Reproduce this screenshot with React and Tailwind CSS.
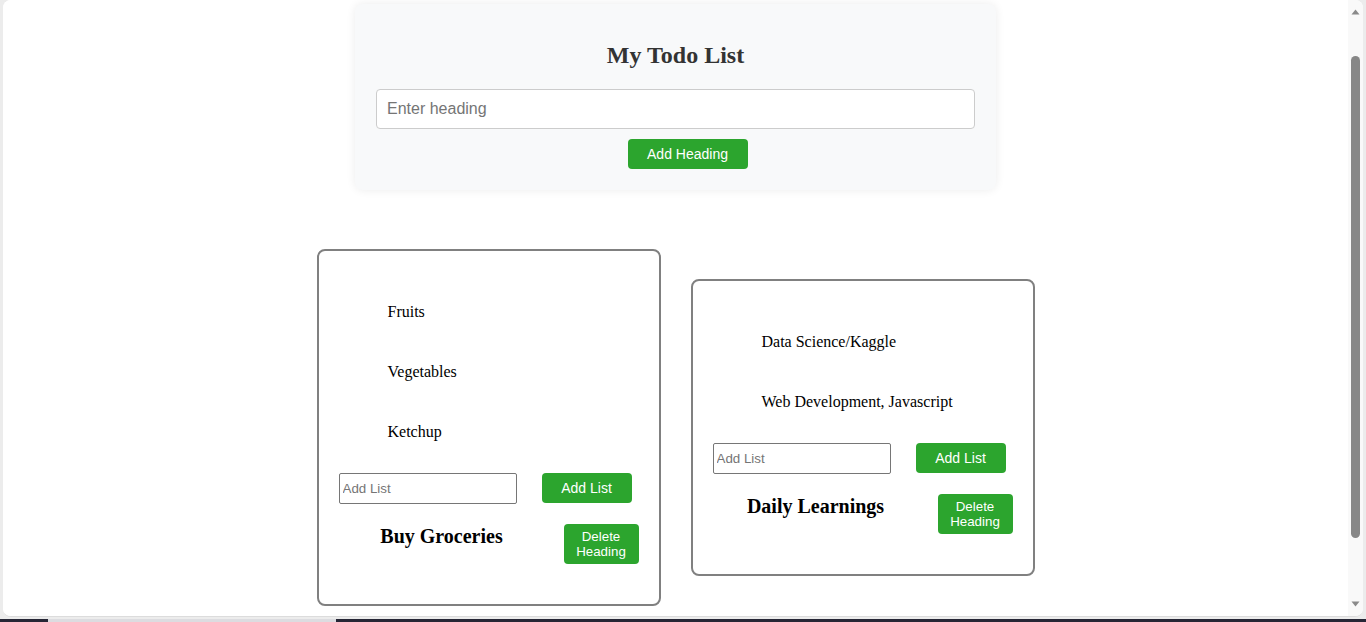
import { useState } from 'react';

const serif = "font-['Liberation_Serif','Times_New_Roman',serif]";
const sans = "font-['Liberation_Sans',Arial,sans-serif]";

const initialHeadings = [
  { id: 1, title: 'Buy Groceries', items: ['Fruits', 'Vegetables', 'Ketchup'] },
  { id: 2, title: 'Daily Learnings', items: ['Data Science/Kaggle', 'Web Development, Javascript'] },
];

const HeadingCard = ({ heading, onAddItem, onDelete }) => {
  const [text, setText] = useState('');

  return (
    <div className="w-[344px] border-2 border-[#808080] rounded-[8px] bg-white px-[20px] pt-[52px] pb-[40px]">
      {/* List items */}
      <ul className={`${serif} text-[16px] leading-[18px] text-black pl-[49px] flex flex-col gap-[42px]`}>
        {heading.items.map((item, i) => (
          <li key={i}>{item}</li>
        ))}
      </ul>

      {/* Add list row */}
      <div className="flex items-start gap-[25px] mt-[32px]">
        <input
          value={text}
          onChange={(e) => setText(e.target.value)}
          placeholder="Add List"
          className={`${sans} w-[178px] h-[31px] border border-[#767676] rounded-[2px] px-[3px] text-[13.33px] text-black placeholder:text-[#757575] outline-none`}
        />
        <button
          onClick={() => {
            if (!text.trim()) return;
            onAddItem(heading.id, text.trim());
            setText('');
          }}
          className={`${sans} w-[90px] h-[30px] bg-[#2ca52e] text-white text-[14px] rounded-[4px]`}
        >
          Add List
        </button>
      </div>

      {/* Heading row */}
      <div className="flex items-start mt-[20px]">
        <h2 className={`${serif} w-[204px] ml-[1px] text-center text-[20px] leading-[24px] font-bold text-black`}>
          {heading.title}
        </h2>
        <button
          onClick={() => onDelete(heading.id)}
          className={`${sans} ml-[20px] w-[75px] h-[40px] bg-[#2ca52e] text-white text-[13.33px] leading-[15px] rounded-[4px] px-[6px]`}
        >
          Delete Heading
        </button>
      </div>
    </div>
  );
};

const App = () => {
  const [headings, setHeadings] = useState(initialHeadings);
  const [newHeading, setNewHeading] = useState('');

  const addHeading = () => {
    if (!newHeading.trim()) return;
    setHeadings([...headings, { id: Date.now(), title: newHeading.trim(), items: [] }]);
    setNewHeading('');
  };

  const addItem = (id, item) => {
    setHeadings(headings.map((h) => (h.id === id ? { ...h, items: [...h.items, item] } : h)));
  };

  const deleteHeading = (id) => {
    setHeadings(headings.filter((h) => h.id !== id));
  };

  return (
    <div className="w-[1366px] h-[622px] bg-[#ececec] flex flex-col overflow-hidden">
      <div className="flex-1 flex ml-[3px] mr-[3px] bg-white rounded-t-[8px] rounded-b-[8px] border-b border-[#dcdcdc] overflow-hidden">
        {/* Page */}
        <div className="flex-1 bg-white flex flex-col items-center pt-[4px]">
          {/* Top card */}
          <div className="w-[641px] bg-[#f8f9fa] rounded-[8px] shadow-[0_0_10px_rgba(0,0,0,0.08)] px-[21px] pt-[24px] pb-[21px] flex flex-col items-center">
            <h1 className={`${serif} text-[24px] leading-[28px] font-bold text-[#333] mt-[13px]`}>My Todo List</h1>
            <input
              value={newHeading}
              onChange={(e) => setNewHeading(e.target.value)}
              placeholder="Enter heading"
              className={`${sans} mt-[20px] w-full h-[40px] border border-[#ccc] rounded-[4px] bg-white px-[10px] text-[16px] text-black placeholder:text-[#757575] outline-none`}
            />
            <button
              onClick={addHeading}
              className={`${sans} mt-[10px] ml-[24px] w-[120px] h-[30px] bg-[#2ca52e] text-white text-[14px] rounded-[4px]`}
            >
              Add Heading
            </button>
          </div>

          {/* Heading cards */}
          <div className="flex items-center justify-center gap-[30px] h-[357px] mt-[59px]">
            {headings.map((h) => (
              <HeadingCard key={h.id} heading={h} onAddItem={addItem} onDelete={deleteHeading} />
            ))}
          </div>
        </div>

        {/* Scrollbar */}
        <div className="w-[15px] bg-[#f9f9f9] flex flex-col items-center">
          <svg width="9" height="6" viewBox="0 0 9 6" className="mt-[9px]">
            <path d="M0.5 5.5 L4.5 0.5 L8.5 5.5 Z" fill="#8a8a8a" />
          </svg>
          <div className="w-[9px] h-[482px] mt-[41px] bg-[#878787] rounded-full" />
          <div className="flex-1" />
          <svg width="9" height="6" viewBox="0 0 9 6" className="mb-[9px]">
            <path d="M0.5 0.5 L4.5 5.5 L8.5 0.5 Z" fill="#8a8a8a" />
          </svg>
        </div>
      </div>

      {/* Taskbar edge */}
      <div className="h-[3px] mt-[2px] bg-[#262635] flex">
        <div className="ml-[48px] w-[288px] bg-[#dcdce0]" />
      </div>
    </div>
  );
};

export default App;
